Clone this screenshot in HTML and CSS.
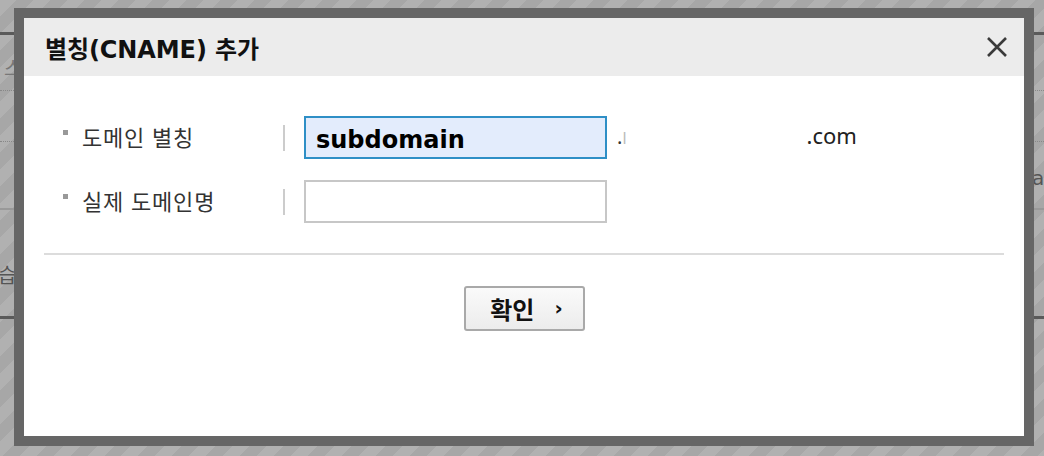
FILE: index.html
```html
<!DOCTYPE html>
<html lang="ko">
<head>
<meta charset="utf-8">
<title>별칭(CNAME) 추가</title>
<link rel="stylesheet" href="styles.css">
</head>
<body>
<div class="page">
  <div class="page-bar"></div>
  <div class="page-row r1"><span class="frag-l">스</span></div>
  <div class="page-row r2"></div>
  <div class="page-row r3"><span class="frag-r">a</span></div>
  <div class="page-row r4"><span class="frag-l2">습</span></div>
  <div class="page-bar bottom"></div>
</div>

<div class="modal">
  <div class="modal-head">
    <h1 class="modal-title">별칭(CNAME) 추가</h1>
    <button class="close" aria-label="닫기">
      <svg width="22" height="22" viewBox="0 0 22 22"><path d="M2 2 L20 20 M20 2 L2 20" stroke="#3a3a3a" stroke-width="2.6" fill="none"/></svg>
    </button>
  </div>
  <div class="modal-body">
    <div class="form-row">
      <div class="label"><span class="bullet"></span>도메인 별칭</div>
      <div class="sep"></div>
      <div class="field active">subdomain</div>
      <span class="dot">.<span class="dot-l">l</span></span>
      <span class="tld">.com</span>
    </div>
    <div class="form-row second">
      <div class="label"><span class="bullet"></span>실제 도메인명</div>
      <div class="sep"></div>
      <div class="field"></div>
    </div>
    <hr class="divider">
    <div class="actions">
      <button class="ok">확인<span class="arrow">›</span></button>
    </div>
  </div>
</div>
</body>
</html>
```

FILE: styles.css
```css
html, body {
  margin: 0;
  padding: 0;
}
body {
  width: 1044px;
  height: 456px;
  overflow: hidden;
  position: relative;
  font-family: "Noto Sans CJK KR", "Noto Sans", sans-serif;
  background: repeating-linear-gradient(135deg, #b1b1b1 0 12px, #a7a7a7 12px 24px);
}
.page {
  padding-top: 32px;
  color: #555;
}
.page-bar {
  height: 3px;
  background: #5a5a5a;
}
.page-row {
  border-bottom: 1px dotted #888;
  position: relative;
  font-size: 20px;
}
.r1 { height: 55px; }
.r2 { height: 50px; }
.r3 { height: 66px; border-bottom: 2px solid #999; }
.r4 { height: 106px; border-bottom: none; }
.frag-l { position: absolute; left: 4px; top: 18px; color: #777; }
.frag-l2 { position: absolute; left: -2px; top: 50px; color: #555; }
.frag-r { position: absolute; left: 1032px; top: 24px; color: #555; font-family: "DejaVu Sans", sans-serif; }

.modal {
  position: absolute;
  left: 14px;
  top: 8px;
  width: 1000px;
  height: 418px;
  border: 10px solid #666;
  background: #fff;
}
.modal-head {
  height: 58px;
  background: #ececec;
  display: flex;
  align-items: center;
  justify-content: space-between;
  padding: 0 16px 0 21px;
}
.modal-title {
  margin: 0;
  font-family: "DejaVu Sans", "Noto Sans CJK KR", sans-serif;
  font-size: 24px;
  font-weight: 700;
  color: #111;
  letter-spacing: -0.1px;
}
.close {
  border: 0;
  background: none;
  padding: 0;
  width: 22px;
  height: 22px;
  display: flex;
}
.modal-body {
  padding: 40px 20px 0 20px;
}
.form-row {
  display: flex;
  align-items: center;
  height: 43px;
}
.form-row.second {
  margin-top: 21px;
}
.label {
  width: 239px;
  display: flex;
  align-items: center;
  font-size: 22px;
  letter-spacing: 0.8px;
  color: #333;
  padding-left: 19px;
  box-sizing: border-box;
  margin-top: -4px;
}
.bullet {
  width: 5px;
  height: 5px;
  background: #999;
  margin-right: 14px;
  margin-top: -6px;
}
.sep {
  width: 2px;
  height: 26px;
  background: #ccc;
  margin-right: 19px;
}
.field {
  width: 289px;
  height: 39px;
  border: 2px solid #c7c7c7;
  background: #fff;
  font-family: "DejaVu Sans", sans-serif;
  font-weight: 700;
  font-size: 24px;
  color: #000;
  padding-left: 10px;
  display: flex;
  align-items: center;
}
.field.active {
  background: #e3ecfc;
  border-color: #2e8fc6;
  padding-top: 5px;
  height: 34px;
}
.dot {
  margin-left: 10px;
  font-family: "Noto Sans", sans-serif;
  font-size: 20px;
  color: #333;
  margin-top: -2px;
}
.dot-l {
  color: #bbb;
  font-size: 16px;
}
.tld {
  margin-left: 180px;
  font-family: "Noto Sans", sans-serif;
  font-size: 22px;
  color: #222;
  margin-top: -6px;
}
.divider {
  border: 0;
  height: 2px;
  background: #dcdcdc;
  margin: 30px 0 0 0;
}
.actions {
  display: flex;
  justify-content: center;
  padding-top: 31px;
}
.ok {
  width: 121px;
  height: 45px;
  border: 2px solid #a9a9a9;
  border-radius: 3px;
  background: linear-gradient(#fafafa, #ececec);
  font-family: "Noto Sans CJK KR", sans-serif;
  font-weight: 700;
  font-size: 24px;
  color: #111;
  display: flex;
  align-items: center;
  justify-content: center;
  padding: 0 0 0 4px;
  margin-left: 1px;
}
.arrow {
  font-family: "DejaVu Sans", sans-serif;
  font-weight: 700;
  font-size: 20px;
  margin-left: 20px;
  margin-top: -2px;
}
```
